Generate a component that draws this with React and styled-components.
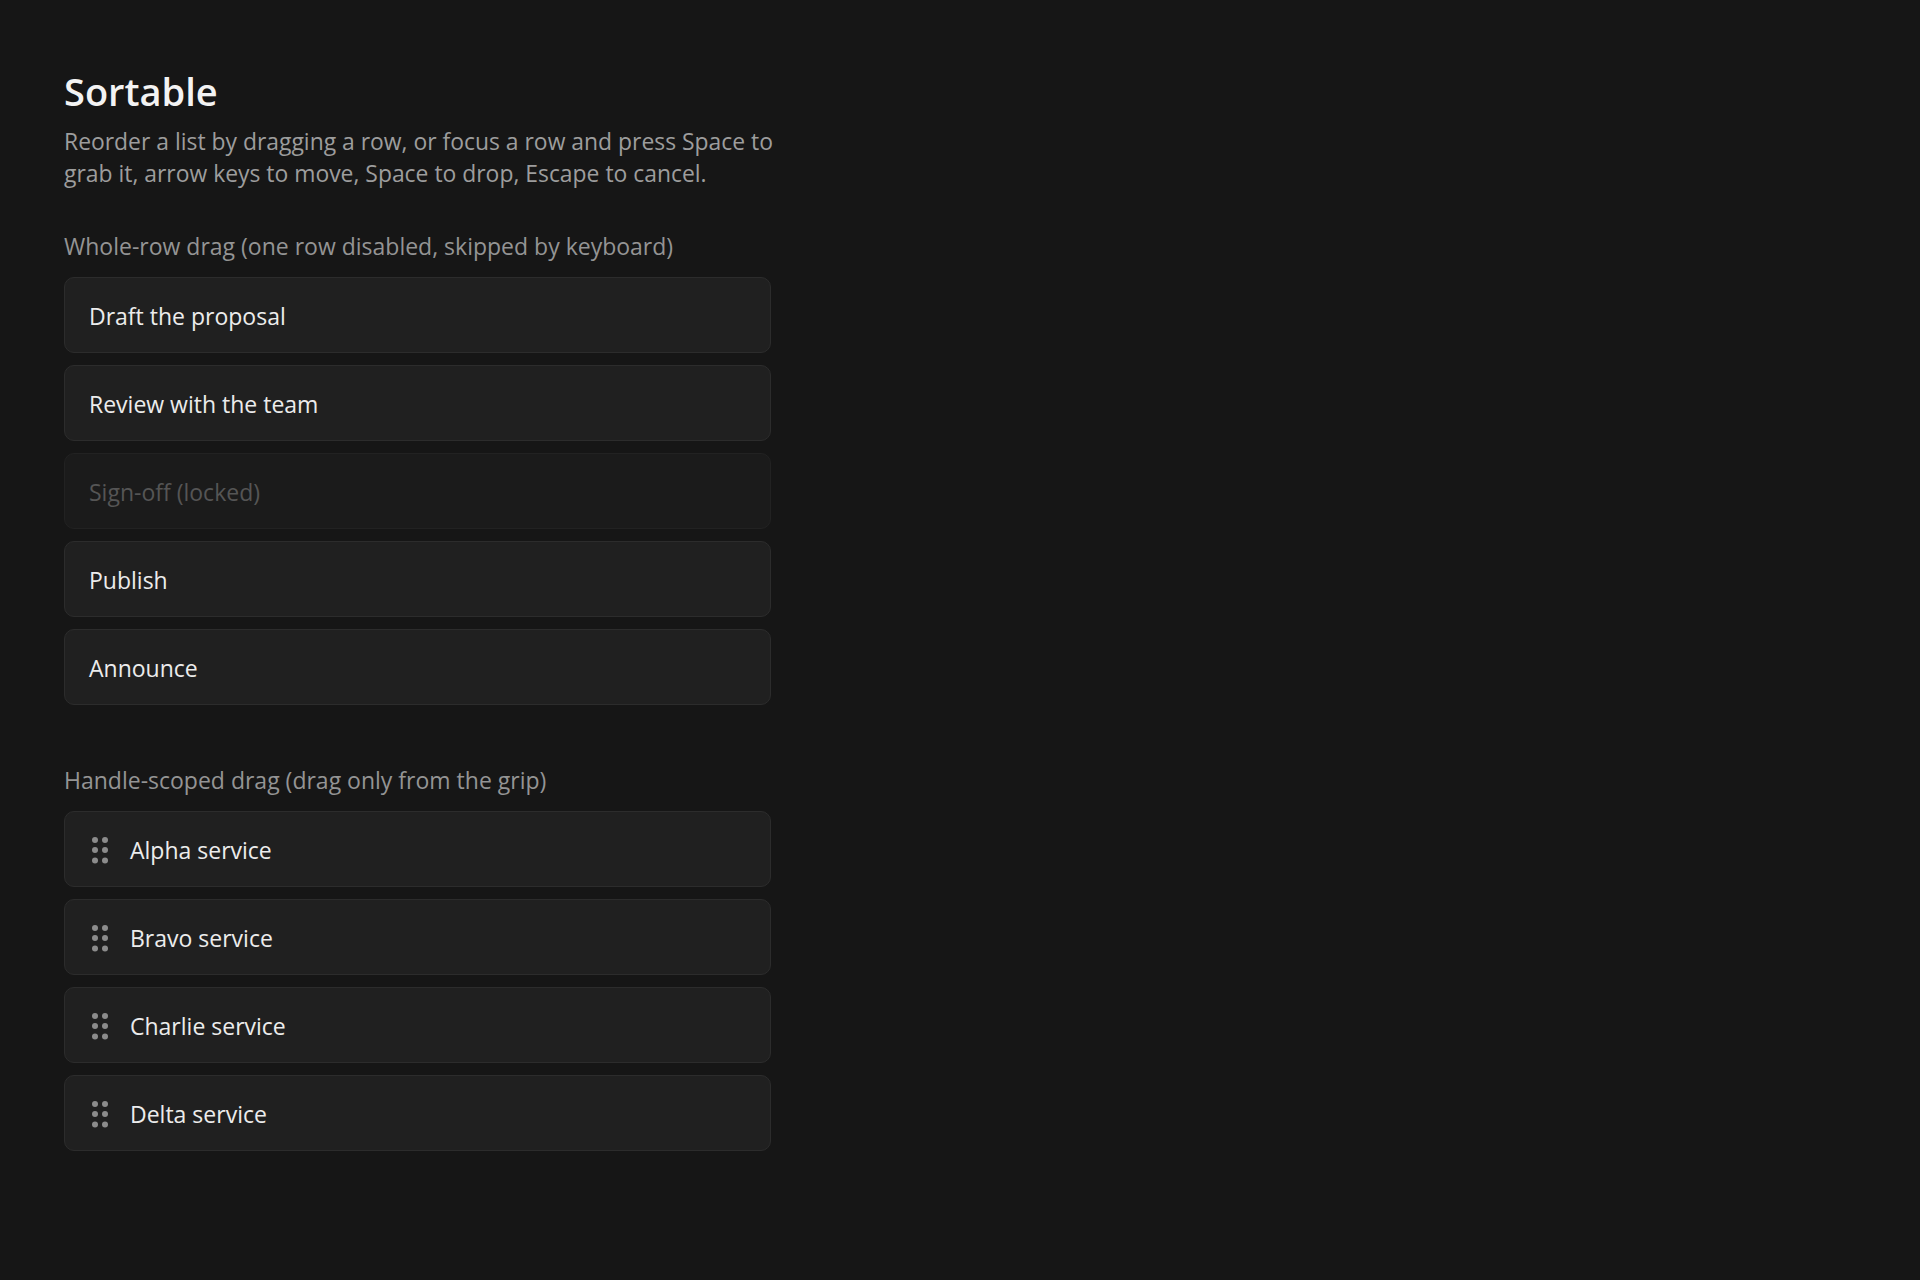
import React from "react";
import styled, { createGlobalStyle } from "styled-components";

const GlobalStyle = createGlobalStyle`
  html, body {
    margin: 0;
    padding: 0;
    background: #161616;
  }
  body {
    font-family: "Open Sans", "Noto Sans", sans-serif;
    color: #ececec;
  }
`;

const Page = styled.main`
  padding: 69px 0 80px 64px;
`;

const Title = styled.h1`
  margin: 0;
  font-size: 38px;
  line-height: 44px;
  font-weight: 600;
  color: #f3f3f3;
`;

const Lead = styled.p`
  width: 726px;
  margin: 13px 0 0;
  font-size: 22.9px;
  line-height: 32px;
  color: #9d9d9d;
`;

const Section = styled.section`
  width: 707px;
  margin-top: ${(p) => p.$gap}px;
`;

const Label = styled.div`
  font-size: 23px;
  line-height: 32px;
  color: #949494;
  margin-bottom: 15px;
`;

const List = styled.ul`
  list-style: none;
  margin: 0;
  padding: 0;
  display: flex;
  flex-direction: column;
  gap: 12px;
`;

const Row = styled.li`
  box-sizing: border-box;
  height: 76px;
  display: flex;
  align-items: center;
  gap: 19px;
  padding: 1px 24px 0;
  border-radius: 10px;
  border: 1px solid ${(p) => (p.$disabled ? "#222222" : "#2c2c2c")};
  background: ${(p) => (p.$disabled ? "#1b1b1b" : "#202020")};
  color: ${(p) => (p.$disabled ? "#555555" : "#ececec")};
  font-size: 23px;
  cursor: ${(p) => (p.$disabled ? "not-allowed" : "grab")};
`;

const Grip = styled.svg`
  flex: none;
  width: 22px;
  height: 28px;
  fill: #8c8c8c;
`;

function GripIcon() {
  return (
    <Grip viewBox="0 0 22 28" aria-hidden="true">
      <circle cx="6" cy="4" r="3" />
      <circle cx="16" cy="4" r="3" />
      <circle cx="6" cy="14" r="3" />
      <circle cx="16" cy="14" r="3" />
      <circle cx="6" cy="24.5" r="3" />
      <circle cx="16" cy="24.5" r="3" />
    </Grip>
  );
}

const tasks = [
  { id: 1, label: "Draft the proposal" },
  { id: 2, label: "Review with the team" },
  { id: 3, label: "Sign-off (locked)", disabled: true },
  { id: 4, label: "Publish" },
  { id: 5, label: "Announce" },
];

const services = ["Alpha service", "Bravo service", "Charlie service", "Delta service"];

export default function App() {
  return (
    <>
      <GlobalStyle />
      <Page>
        <Title>Sortable</Title>
        <Lead>
          Reorder a list by dragging a row, or focus a row and press Space to
          grab it, arrow keys to move, Space to drop, Escape to cancel.
        </Lead>

        <Section $gap={40}>
          <Label>Whole-row drag (one row disabled, skipped by keyboard)</Label>
          <List>
            {tasks.map((t) => (
              <Row key={t.id} $disabled={t.disabled} tabIndex={t.disabled ? -1 : 0}>
                {t.label}
              </Row>
            ))}
          </List>
        </Section>

        <Section $gap={59}>
          <Label>Handle-scoped drag (drag only from the grip)</Label>
          <List>
            {services.map((s) => (
              <Row key={s}>
                <GripIcon />
                {s}
              </Row>
            ))}
          </List>
        </Section>
      </Page>
    </>
  );
}
